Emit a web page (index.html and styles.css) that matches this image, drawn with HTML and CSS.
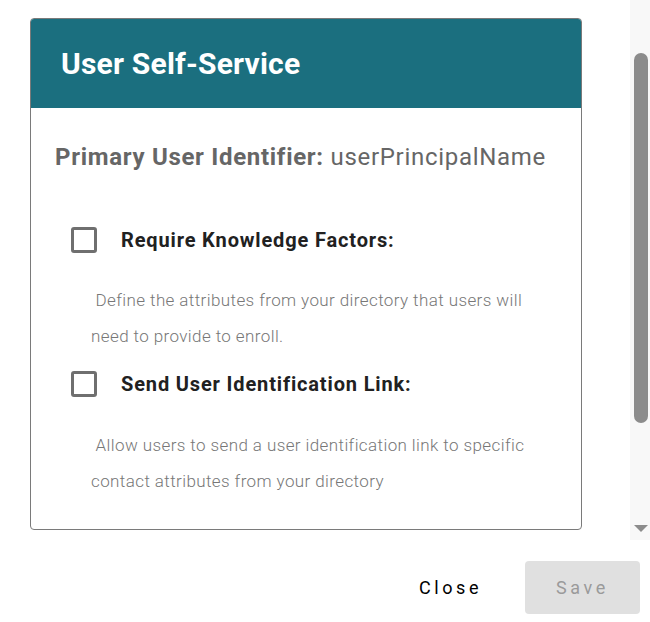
FILE: index.html
```html
<!DOCTYPE html>
<html>
<head>
<meta charset="utf-8">
<link rel="stylesheet" href="styles.css">
</head>
<body>
<div class="screen">
  <div class="main">
    <div class="content">
      <section class="card">
        <header class="card-header">
          <h1 class="card-title">User Self-Service</h1>
        </header>
        <div class="card-body">
          <p class="identifier"><span class="identifier-label">Primary User Identifier:</span> <span class="identifier-value">userPrincipalName</span></p>
          <div class="option">
            <span class="checkbox"></span>
            <span class="option-label">Require Knowledge Factors:</span>
          </div>
          <p class="option-desc">&nbsp;Define the attributes from your directory that users will need to provide to enroll.</p>
          <div class="option option-second">
            <span class="checkbox"></span>
            <span class="option-label">Send User Identification Link:</span>
          </div>
          <p class="option-desc option-desc-second">&nbsp;Allow users to send a user identification link to specific contact attributes from your directory</p>
        </div>
      </section>
    </div>
    <div class="scrollbar">
      <div class="scroll-thumb"></div>
      <div class="scroll-spacer"></div>
      <div class="scroll-arrow"></div>
    </div>
  </div>
  <div class="actions">
    <button class="btn btn-close">Close</button>
    <button class="btn btn-save" disabled>Save</button>
  </div>
</div>
</body>
</html>
```

FILE: styles.css
```css
html, body {
  margin: 0;
  padding: 0;
  background: #ffffff;
}

body {
  font-family: Roboto, "Liberation Sans", sans-serif;
  width: 650px;
  height: 622px;
  overflow: hidden;
}

.screen {
  display: flex;
  flex-direction: column;
}

.main {
  display: flex;
  height: 540px;
}

.content {
  flex: 1;
  padding: 18px 0 0 30px;
}

.card {
  width: 552px;
  box-sizing: border-box;
  border: 1px solid #7a7a7a;
  border-radius: 4px;
  overflow: hidden;
}

.card-header {
  background: #1b6f7f;
  height: 89px;
  display: flex;
  align-items: center;
  padding-left: 30px;
}

.card-title {
  margin: 0;
  color: #ffffff;
  font-size: 30px;
  font-weight: 700;
  letter-spacing: 0.2px;
}

.card-body {
  padding: 34px 30px 30px 24px;
}

.identifier {
  margin: 0;
  font-size: 24px;
  line-height: 30px;
  color: #666666;
  letter-spacing: 0.7px;
  white-space: nowrap;
}

.identifier-label {
  font-weight: 700;
}

.identifier-value {
  font-weight: 400;
}

.option {
  display: flex;
  align-items: center;
  margin-top: 55px;
  padding-left: 16px;
  gap: 24px;
}

.option-second {
  margin-top: 17px;
}

.checkbox {
  width: 26px;
  height: 26px;
  box-sizing: border-box;
  border: 3px solid #6f6f6f;
  border-radius: 3px;
  flex: none;
}

.option-label {
  font-size: 20px;
  font-weight: 700;
  color: #212121;
  letter-spacing: 0.85px;
}

.option-desc {
  margin: 29px 0 0 0;
  padding-left: 36px;
  font-size: 17px;
  font-weight: 300;
  line-height: 36px;
  color: #777777;
  letter-spacing: 0.4px;
}

.option-desc-second {
  margin-top: 30px;
}

.scrollbar {
  width: 20px;
  background: #f8f8f8;
  display: flex;
  flex-direction: column;
  align-items: flex-start;
  padding-top: 53px;
  box-sizing: border-box;
}

.scroll-thumb {
  margin-left: 4px;
  width: 14px;
  height: 370px;
  border-radius: 7px;
  background: #8c8c8c;
}

.scroll-spacer {
  flex: 1;
}

.scroll-arrow {
  margin: 0 0 8px 4px;
  width: 0;
  height: 0;
  border-left: 7px solid transparent;
  border-right: 7px solid transparent;
  border-top: 7px solid #8c8c8c;
}

.actions {
  display: flex;
  justify-content: flex-end;
  gap: 17px;
  padding: 21px 10px 0 0;
}

.btn {
  width: 115px;
  height: 53px;
  border: none;
  border-radius: 4px;
  font-family: Roboto, "Liberation Sans", sans-serif;
  font-size: 18px;
  font-weight: 400;
  letter-spacing: 3.6px;
  background: transparent;
}

.btn-close {
  color: #000000;
}

.btn-save {
  background: #e0e0e0;
  color: #9a9a9a;
}
```
